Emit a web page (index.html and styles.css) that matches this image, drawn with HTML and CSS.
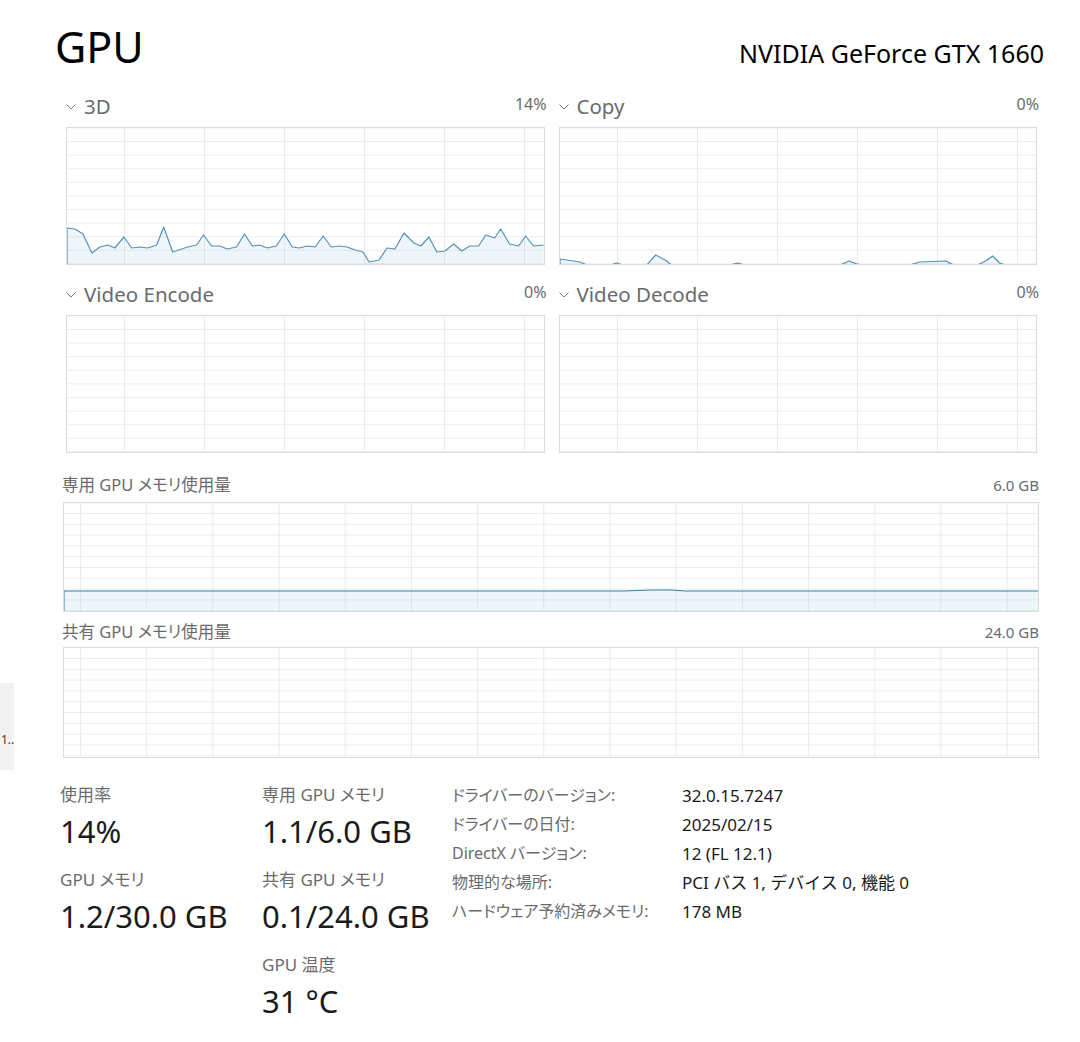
FILE: index.html
```html
<!DOCTYPE html>
<html lang="ja">
<head>
<meta charset="utf-8">
<title>GPU</title>
<link rel="stylesheet" href="styles.css">
</head>
<body>
<div class="page">
  <aside class="side">
    <div class="side-item"><span class="side-text">1..</span></div>
  </aside>
  <main class="main">
    <header class="title-row">
      <h1 class="title">GPU</h1>
      <div class="device">NVIDIA GeForce GTX 1660</div>
    </header>

    <section class="engines">
      <div class="engine">
        <div class="engine-head">
          <span class="engine-name"><svg class="chev" viewBox="0 0 10 6"><polyline points="0.5,0.5 5,5 9.5,0.5"/></svg>3D</span>
          <span class="pct">14%</span>
        </div>
        <div class="graph graph-sm">
          <svg class="plot" viewBox="1 1 478 136" preserveAspectRatio="none">
            <polygon class="fill" points="1,138 1,101 9,102 17,107 26,126 34,120 42,118 49,121 58,110 66,121 74,120 82,121 91,118 98,100 107,125 116,122 122,120 131,118 138,108 146,119 154,119 162,122 171,120 179,107 187,119 194,118 202,121 211,119 219,107 227,120 234,121 242,119 250,120 258,109 266,120 274,119 282,120 290,123 298,125 304,135 314,133 322,121 330,122 339,106 349,116 356,119 364,110 372,125 380,124 389,117 397,124 405,119 414,119 421,108 430,111 436,102 445,117 454,119 461,109 469,119 479,118 479,138"/>
            <polyline class="line" points="1,138 1,101 9,102 17,107 26,126 34,120 42,118 49,121 58,110 66,121 74,120 82,121 91,118 98,100 107,125 116,122 122,120 131,118 138,108 146,119 154,119 162,122 171,120 179,107 187,119 194,118 202,121 211,119 219,107 227,120 234,121 242,119 250,120 258,109 266,120 274,119 282,120 290,123 298,125 304,135 314,133 322,121 330,122 339,106 349,116 356,119 364,110 372,125 380,124 389,117 397,124 405,119 414,119 421,108 430,111 436,102 445,117 454,119 461,109 469,119 479,118"/>
          </svg>
        </div>
      </div>

      <div class="engine">
        <div class="engine-head">
          <span class="engine-name"><svg class="chev" viewBox="0 0 10 6"><polyline points="0.5,0.5 5,5 9.5,0.5"/></svg>Copy</span>
          <span class="pct">0%</span>
        </div>
        <div class="graph graph-sm">
          <svg class="plot" viewBox="1 1 478 136" preserveAspectRatio="none">
            <polygon class="fill" points="1,138 1,132 21,135 28,138 52,138 58,136 64,138 88,138 97,128 108,134 113,138 172,138 179,136 186,138 282,138 291,134 299,137 305,138 352,138 362,135 388,134 396,138 420,138 428,134 435,129 442,136 448,138 479,138"/>
            <polyline class="line" points="1,138 1,132 21,135 28,138 52,138 58,136 64,138 88,138 97,128 108,134 113,138 172,138 179,136 186,138 282,138 291,134 299,137 305,138 352,138 362,135 388,134 396,138 420,138 428,134 435,129 442,136 448,138 479,138"/>
          </svg>
        </div>
      </div>

      <div class="engine">
        <div class="engine-head">
          <span class="engine-name"><svg class="chev" viewBox="0 0 10 6"><polyline points="0.5,0.5 5,5 9.5,0.5"/></svg>Video Encode</span>
          <span class="pct">0%</span>
        </div>
        <div class="graph graph-sm"></div>
      </div>

      <div class="engine">
        <div class="engine-head">
          <span class="engine-name"><svg class="chev" viewBox="0 0 10 6"><polyline points="0.5,0.5 5,5 9.5,0.5"/></svg>Video Decode</span>
          <span class="pct">0%</span>
        </div>
        <div class="graph graph-sm"></div>
      </div>
    </section>

    <section class="mem">
      <div class="mem-head mem-head-first"><span class="mem-name">専用 GPU メモリ使用量</span><span>6.0 GB</span></div>
      <div class="graph graph-mem">
        <svg class="plot" viewBox="1 1 974 108" preserveAspectRatio="none">
          <polygon class="fill" points="1,110 1,89 560,89 588,88 608,88 622,89 975,89 975,110"/>
          <polyline class="line mem-line" points="1,110 1,89 560,89 588,88 608,88 622,89 975,89"/>
        </svg>
      </div>
      <div class="mem-head"><span class="mem-name">共有 GPU メモリ使用量</span><span>24.0 GB</span></div>
      <div class="graph graph-mem graph-mem2"></div>
    </section>

    <section class="stats">
      <div class="stat-col">
        <div class="stat">
          <div class="stat-label">使用率</div>
          <div class="stat-value">14%</div>
        </div>
        <div class="stat">
          <div class="stat-label">GPU メモリ</div>
          <div class="stat-value">1.2/30.0 GB</div>
        </div>
      </div>
      <div class="stat-col">
        <div class="stat">
          <div class="stat-label">専用 GPU メモリ</div>
          <div class="stat-value">1.1/6.0 GB</div>
        </div>
        <div class="stat">
          <div class="stat-label">共有 GPU メモリ</div>
          <div class="stat-value">0.1/24.0 GB</div>
        </div>
        <div class="stat">
          <div class="stat-label">GPU 温度</div>
          <div class="stat-value">31 °C</div>
        </div>
      </div>
      <dl class="details">
        <dt>ドライバーのバージョン:</dt><dd>32.0.15.7247</dd>
        <dt>ドライバーの日付:</dt><dd>2025/02/15</dd>
        <dt>DirectX バージョン:</dt><dd>12 (FL 12.1)</dd>
        <dt>物理的な場所:</dt><dd>PCI バス 1, デバイス 0, 機能 0</dd>
        <dt>ハードウェア予約済みメモリ:</dt><dd>178 MB</dd>
      </dl>
    </section>
  </main>
</div>
</body>
</html>
```

FILE: styles.css
```css
* { box-sizing: border-box; }

html, body {
  margin: 0;
  padding: 0;
  background: #ffffff;
}

body {
  font-family: "Noto Sans", "Noto Sans CJK JP", sans-serif;
  font-feature-settings: "palt";
  color: #1b1b1b;
  width: 1080px;
  height: 1042px;
  overflow: hidden;
}

.page {
  display: flex;
  align-items: flex-start;
}

/* clipped sidebar item on the far left */
.side {
  flex: none;
  width: 14px;
  padding-top: 683px;
}

.side-item {
  height: 87px;
  background: #f2f2f2;
  padding-top: 47px;
  padding-left: 1px;
}

.side-text {
  display: block;
  white-space: nowrap;
  font-size: 12px;
  line-height: 20px;
  color: #3a3a3a;
}

.main {
  flex: none;
  margin-left: 48px;
  width: 978px;
}

/* header */
.title-row {
  display: flex;
  justify-content: space-between;
  align-items: baseline;
  margin: 0 -4px 0 -7px;
  padding-top: 22px;
}

.title {
  margin: 0;
  font-size: 43px;
  line-height: 50px;
  font-weight: 400;
  color: #000;
}

.device {
  font-size: 25px;
  line-height: 30px;
  color: #000;
}

/* engine graphs */
.engines {
  display: grid;
  grid-template-columns: 1fr 1fr;
  column-gap: 12px;
  row-gap: 14px;
  margin: 19px 1px 0 4px;
}

.engine-head {
  display: flex;
  justify-content: space-between;
  align-items: baseline;
  height: 26px;
  line-height: 26px;
  margin-bottom: 10px;
}

.engine-name {
  font-size: 20.5px;
  color: #6b6b6b;
  display: flex;
  align-items: center;
}

.chev {
  width: 10px;
  height: 6px;
  margin: 2px 8px 0 0;
  fill: none;
  stroke: #7a7a7a;
  stroke-width: 1;
}

.pct {
  font-size: 16px;
  color: #6b6b6b;
}

.graph {
  border: 1px solid #dcdcdc;
  background-color: #fff;
  background-image:
    linear-gradient(to right, #ebebeb 1px, transparent 1px),
    linear-gradient(to bottom, #ededed 1px, transparent 1px);
}

.graph-sm {
  height: 138px;
  margin-right: 2px;
  background-size: 80px 100%, 100% 13.6px;
  background-position: 57px 0, 0 13px;
}

.plot {
  display: block;
  width: 100%;
  height: 100%;
  overflow: hidden;
}

.fill {
  fill: rgba(17, 125, 187, 0.07);
  stroke: none;
}

.line {
  fill: none;
  stroke: #5292bd;
  stroke-width: 1.2;
  stroke-linejoin: round;
}

.mem-line {
  stroke: #2f7ca5;
  stroke-width: 1;
}

/* memory graphs */
.mem {
  margin-top: 22px;
}

.mem-head {
  display: flex;
  justify-content: space-between;
  align-items: center;
  height: 20px;
  line-height: 20px;
  font-size: 15px;
  color: #6b6b6b;
  margin: 10px 1px 5px 0;
}

.mem-name {
  font-size: 16.5px;
}

.mem-head-first {
  margin-top: 0;
  margin-bottom: 7px;
}

.graph-mem {
  height: 110px;
  margin: 0 1px;
  background-size: 66.2px 100%, 100% 10.8px;
  background-position: 16px 0, 0 10px;
}

.graph-mem2 {
  height: 111px;
}

/* stats */
.stats {
  display: flex;
  align-items: flex-start;
  margin: 26px 0 0 -2px;
}

.stat-col {
  flex: none;
  display: flex;
  flex-direction: column;
  gap: 18px;
}

.stat-col:first-child { width: 202px; }
.stat-col:nth-child(2) { width: 190px; }

.stat-label {
  font-size: 17px;
  line-height: 22px;
  color: #6b6b6b;
}

.stat-value {
  margin-top: 5px;
  font-size: 31px;
  line-height: 40px;
  color: #1b1b1b;
}

.details {
  display: grid;
  grid-template-columns: 230px auto;
  margin: -3px 0 0 0;
  font-size: 16px;
  line-height: 29px;
}

.details dt {
  color: #6b6b6b;
  white-space: nowrap;
}

.details dd {
  margin: 0;
  color: #1b1b1b;
  white-space: nowrap;
  font-size: 17px;
  font-feature-settings: normal;
}
```
